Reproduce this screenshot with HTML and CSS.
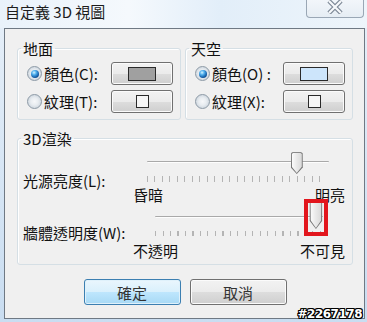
FILE: index.html
```html
<!DOCTYPE html>
<html lang="zh-Hant">

<head>
    <meta charset="utf-8">
    <title>自定義 3D 視圖</title>
    <link rel="stylesheet" href="styles.css">
</head>

<body>

    <div class="window">
        <div class="titlebar">
            <div class="title">自定義 3D 視圖</div>
            <div class="close">
                <svg width="18" height="14" viewBox="0 0 18 14">
                    <path d="M3 1 L15 13 M15 1 L3 13" stroke="#7d8896" stroke-width="4.5" fill="none"/>
                    <path d="M3 1 L15 13 M15 1 L3 13" stroke="#f7f9fb" stroke-width="2.2" fill="none"/>
                </svg>
            </div>
        </div>

        <div class="client">
            <div class="top-groups">
                <fieldset class="group">
                    <legend>地面</legend>
                    <div class="option">
                        <span class="radio on"></span>
                        <span class="opt-label">顏色(C):</span>
                        <button class="pick"><span class="swatch ground"></span></button>
                    </div>
                    <div class="option">
                        <span class="radio"></span>
                        <span class="opt-label">紋理(T):</span>
                        <button class="pick"><span class="tex"></span></button>
                    </div>
                </fieldset>

                <fieldset class="group">
                    <legend>天空</legend>
                    <div class="option">
                        <span class="radio on"></span>
                        <span class="opt-label">顏色(O) :</span>
                        <button class="pick"><span class="swatch sky"></span></button>
                    </div>
                    <div class="option">
                        <span class="radio"></span>
                        <span class="opt-label">紋理(X):</span>
                        <button class="pick"><span class="tex"></span></button>
                    </div>
                </fieldset>
            </div>

            <fieldset class="group render">
                <legend>3D渲染</legend>

                <div class="slider-row light">
                    <div class="slider-label">光源亮度(L):</div>
                    <div class="slider">
                        <div class="track">
                            <span class="thumb" style="left: 82.3%"></span>
                        </div>
                        <div class="ticks"></div>
                    </div>
                    <div class="scale"><span>昏暗</span><span>明亮</span></div>
                </div>

                <div class="slider-row wall">
                    <div class="slider-label">牆體透明度(W):</div>
                    <div class="slider">
                        <div class="track">
                            <span class="thumb big" style="left: 95.8%"></span>
                            <span class="mark" style="left: 95.8%"></span>
                        </div>
                        <div class="ticks"></div>
                    </div>
                    <div class="scale"><span>不透明</span><span>不可見</span></div>
                </div>
            </fieldset>

            <div class="actions">
                <button class="btn default">確定</button>
                <button class="btn">取消</button>
            </div>
        </div>

        <div class="stamp">#2267178</div>
    </div>

</body>

</html>
```

FILE: styles.css
```css
body {
    margin: 0;
    font-family: "Noto Sans CJK TC", "Noto Sans", sans-serif;
    font-size: 15px;
    color: #111;
}

.window {
    position: relative;
    width: 367px;
    height: 322px;
    overflow: hidden;
    background: linear-gradient(180deg, #eef5fb 0, #e4eef8 30px, #c9ddf1 100%);
}

.titlebar {
    height: 28px;
    display: flex;
    justify-content: space-between;
    align-items: flex-start;
    background: linear-gradient(90deg, #e9f2fa 0, #f5f9fd 35%, #e2eef9 60%, #eef5fb 100%);
}

.title {
    padding: 3px 0 0 5px;
    line-height: 18px;
    color: #1c1c1c;
}

.close {
    width: 56px;
    height: 17px;
    margin-right: 3px;
    border: 1px solid #9aa7b5;
    border-top: none;
    border-radius: 0 0 4px 4px;
    background: linear-gradient(180deg, #f2f6fa, #e6edf4);
    display: flex;
    justify-content: center;
    align-items: flex-start;
}

.client {
    margin: 0 2px 0 4px;
    border: 1px solid #6f7984;
    background: #f0f0f0;
    padding: 11px 11px 13px 12px;
}

.top-groups {
    display: grid;
    grid-template-columns: 164px 1fr;
    gap: 4px;
}

.group {
    margin: 0;
    min-width: 0;
    border: 1px solid #d5dfe5;
    border-radius: 3px;
    box-shadow: inset 1px 1px 0 #fff;
    padding: 5px 7px 6px 6px;
    display: flex;
    flex-direction: column;
    gap: 5px;
}

.group legend {
    padding: 0 2px;
    margin-left: -3px;
    line-height: 17px;
}

.option {
    display: flex;
    align-items: center;
    height: 23px;
}

.radio {
    width: 13px;
    height: 13px;
    margin-left: 3px;
    border-radius: 50%;
    border: 1px solid #8d9aa6;
    background: radial-gradient(circle, #f7f8fa 0, #e9edf1 40%, #ccd5dd 80%, #eef1f4 100%);
    display: flex;
    justify-content: center;
    align-items: center;
}

.radio.on::after {
    content: "";
    width: 8px;
    height: 8px;
    border-radius: 50%;
    background: radial-gradient(circle at 38% 32%, #d6f3ff 0, #4fb0ee 30%, #145ea8 65%, #0c3463 100%);
}

.opt-label {
    margin-left: 2px;
}

.pick, .btn {
    font: inherit;
    color: #222;
    border: 1px solid #707070;
    border-radius: 3px;
    background: linear-gradient(180deg, #f2f2f2 0, #ebebeb 50%, #dddddd 51%, #cfcfcf 100%);
    box-shadow: inset 0 0 0 1px #fbfbfb;
    padding: 0;
}

.pick {
    margin-left: auto;
    width: 62px;
    height: 23px;
    display: flex;
    justify-content: center;
    align-items: center;
}

.swatch {
    width: 26px;
    height: 12px;
    border: 1px solid #2a2a2a;
}

.swatch.ground {
    background: #a0a0a0;
}

.swatch.sky {
    background: #cde5fb;
}

.tex {
    width: 11px;
    height: 11px;
    border: 1px solid #2a2a2a;
    background: #f6f6f6;
}

.render {
    margin-top: 10px;
    padding: 9px 7px 5px 6px;
    gap: 0;
}

.slider-row {
    display: grid;
    grid-template-columns: 109px 1fr;
}

.slider-label {
    grid-row: 1 / span 2;
    margin-left: -1px;
    line-height: 17px;
    white-space: nowrap;
}

.light .slider-label {
    padding-top: 16px;
}

.wall {
    margin-top: 8px;
}

.wall .slider-label {
    padding-top: 13px;
}

.light .slider {
    margin: 0 16px 0 14px;
}

.wall .slider {
    margin: 0 22px 0 22px;
}

.track {
    position: relative;
    height: 12px;
}

.track::before {
    content: "";
    position: absolute;
    left: 0;
    right: 0;
    top: 5px;
    height: 1px;
    background: #a9a9a9;
    border-bottom: 1px solid #fdfdfd;
    border-radius: 1px;
}

.thumb {
    position: absolute;
    top: -4px;
    width: 12px;
    height: 22px;
    transform: translateX(-50%);
    background: linear-gradient(180deg, #8a8a8a, #6e6e6e);
    clip-path: polygon(15% 0, 85% 0, 100% 6%, 100% 70%, 50% 100%, 0 70%, 0 6%);
}

.thumb::after {
    content: "";
    position: absolute;
    inset: 1px;
    background: linear-gradient(90deg, #fbfbfb 0, #eaeaea 45%, #d9d9d9 100%);
    clip-path: polygon(12% 0, 88% 0, 100% 6%, 100% 69%, 50% 100%, 0 69%, 0 6%);
}

.thumb.big {
    top: -10px;
    width: 13px;
    height: 28px;
}

.mark {
    position: absolute;
    top: -12px;
    width: 24px;
    height: 37px;
    transform: translateX(-50%);
    box-sizing: border-box;
    border: 4px solid #e2161d;
}

.ticks {
    margin: 8px 8px 0 0;
    height: 6px;
    background: repeating-linear-gradient(90deg, #b4b4b4 0 1px, transparent 1px 7.5px);
}

.wall .ticks {
    height: 5px;
    margin-right: 0;
}

.scale {
    grid-column: 2;
    display: flex;
    justify-content: space-between;
    line-height: 17px;
    margin-top: 4px;
}

.wall .scale {
    margin-top: 6px;
}

.actions {
    margin-top: 14px;
    display: flex;
    justify-content: center;
    gap: 9px;
}

.btn {
    width: 97px;
    height: 26px;
    color: #333;
}

.btn.default {
    border-color: #3c7fb1;
    background: linear-gradient(180deg, #eaf6fd 0, #d9f0fc 50%, #bee6fd 51%, #a7d9f5 100%);
    box-shadow: inset 0 0 0 1px #dff1fb;
}

.stamp {
    position: absolute;
    right: 5px;
    bottom: 1px;
    font-family: "DejaVu Sans", sans-serif;
    font-weight: bold;
    font-size: 12px;
    line-height: 14px;
    letter-spacing: -0.5px;
    color: #fff;
    text-shadow: 1px 0 0 #000, -1px 0 0 #000, 0 1px 0 #000, 0 -1px 0 #000, 1px 1px 0 #000, -1px -1px 0 #000, 1px -1px 0 #000, -1px 1px 0 #000;
}
```
